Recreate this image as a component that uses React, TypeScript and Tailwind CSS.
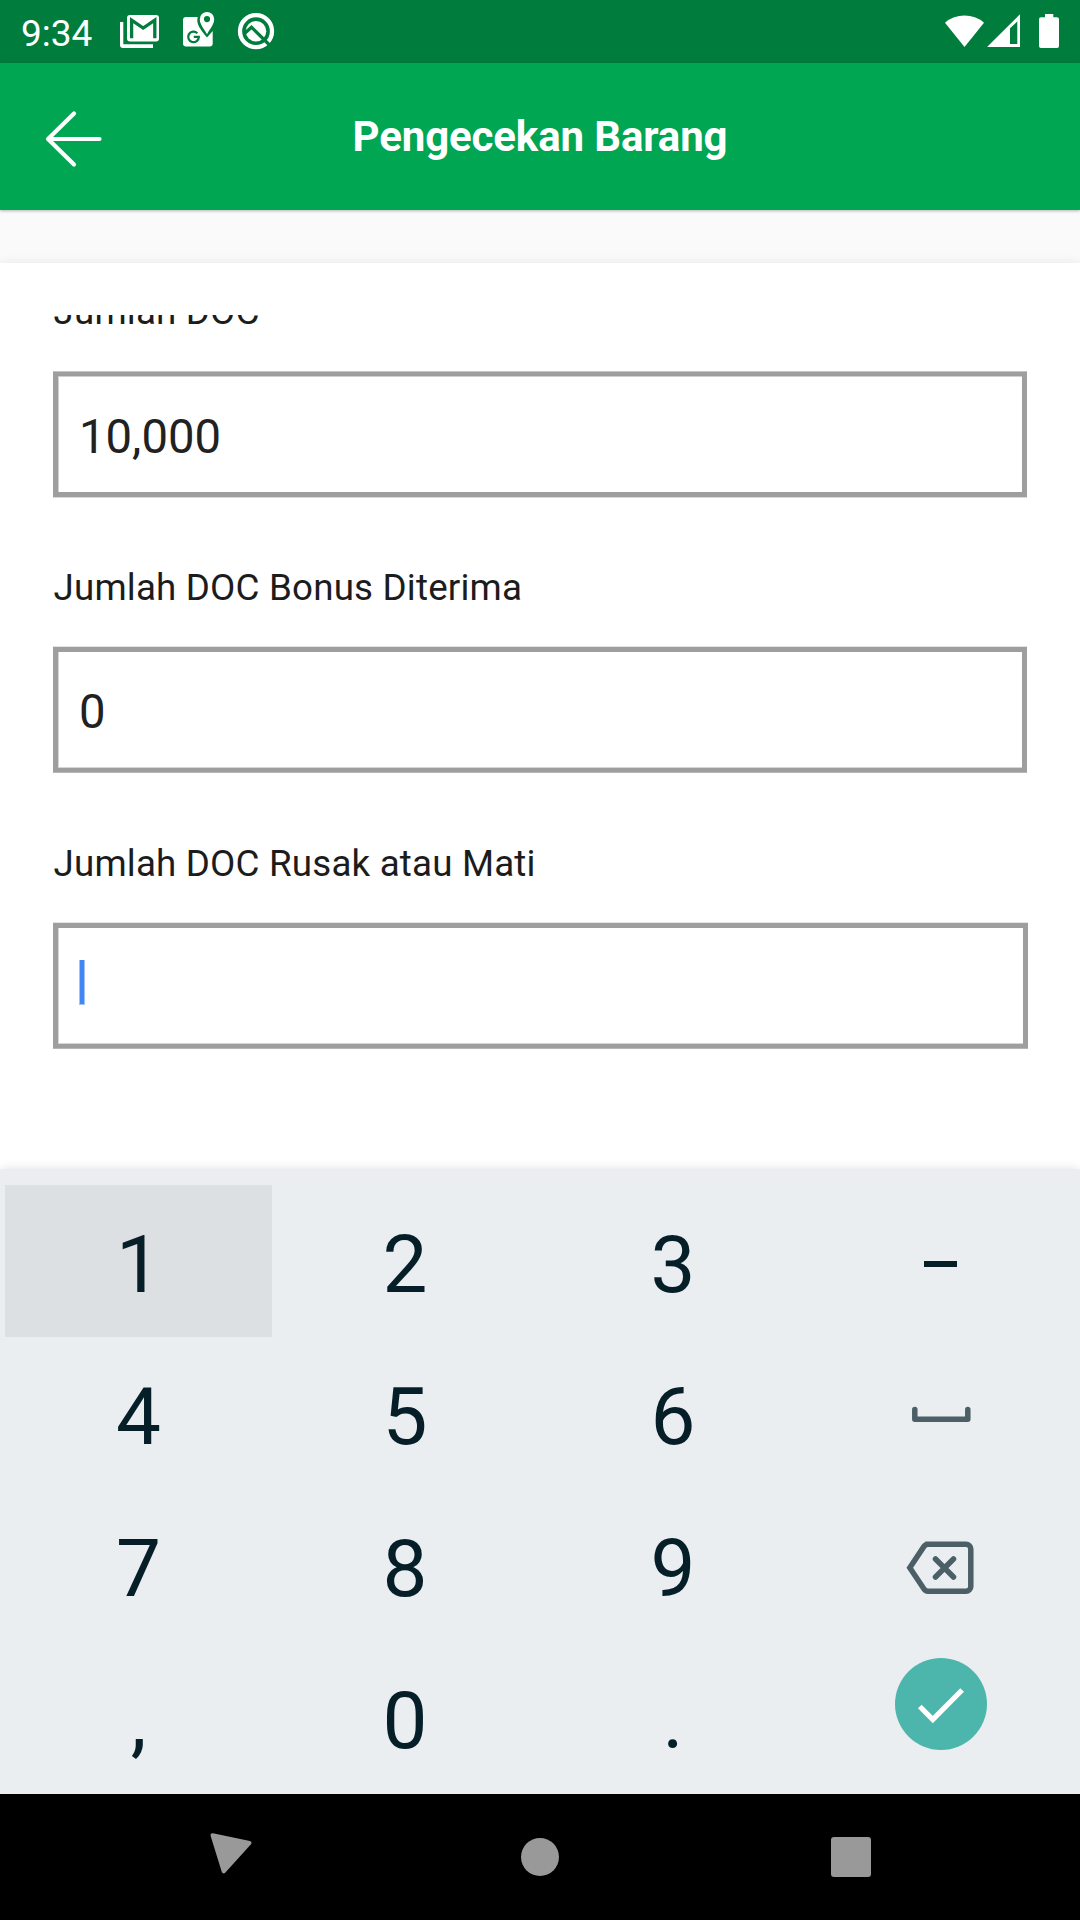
import type { ReactNode } from "react";

function StatusBar() {
  return (
    <div className="flex h-[63px] items-start bg-[#007c3c] text-white">
      <span className="ml-[21px] mt-[12px] w-[80px] text-[37px] leading-[44px] whitespace-nowrap">9:34</span>
      {/* Mail */}
      <svg className="ml-[19px] mt-[14px] h-[34px] w-[40px]" viewBox="120 14 40 34" fill="none">
        <path d="M120 22h3.300v22.200H153V48h-30a3 3 0 0 1-3-3z" fill="#fff" />
        <path d="M130 15h26a3 3 0 0 1 3 3v20.500a3 3 0 0 1-3 3h-26a3 3 0 0 1-3-3V18a3 3 0 0 1 3-3z" fill="#fff" />
        <path d="M131.600 38.300V20.200l11.600 7.800 11.600-7.800v18.100" stroke="#007c3c" strokeWidth="3.300" />
      </svg>
      {/* Maps */}
      <svg className="ml-[23px] mt-[12px] h-[35px] w-[32px]" viewBox="183 12 32 35" fill="none">
        <path d="M186 17h11.700c-1.800 7 2.300 12 9.300 20.500l5.700-6.500v12.500a3 3 0 0 1-3 3H186a3 3 0 0 1-3-3V20a3 3 0 0 1 3-3z" fill="#fff" />
        <path d="M197.300 33.200a5.300 5.300 0 1 0 1.500 3.700h-5" stroke="#007c3c" strokeWidth="2.300" />
        <path fillRule="evenodd" d="M207 12a7.200 7.200 0 0 0-7.200 7.200c0 5.400 4.300 9.300 7.200 15 2.900-5.700 7.200-9.600 7.200-15A7.200 7.200 0 0 0 207 12zm0 4a3.100 3.100 0 1 1 0 6.200 3.100 3.100 0 0 1 0-6.200z" fill="#fff" />
      </svg>
      {/* System beta badge */}
      <svg className="ml-[22px] mt-[12px] h-[38px] w-[38px]" viewBox="237 12 38 38" fill="none">
        <circle cx="256" cy="31.200" r="16" stroke="#fff" strokeWidth="4.300" />
        <circle cx="256" cy="31.200" r="10.300" fill="#fff" />
        <path d="M244.500 33.500l7-6.300L264.500 40l4.500 4.500" stroke="#007c3c" strokeWidth="3.200" />
      </svg>
      {/* Wi-Fi */}
      <svg className="ml-auto mt-[13px] h-[35px] w-[40px]" viewBox="945 13 40 35">
        <path d="M945 22.700a30 30 0 0 1 39 0L964.500 47z" fill="#fff" />
      </svg>
      {/* Mobile signal */}
      <svg className="ml-[2px] mt-[14px] h-[33px] w-[34px]" viewBox="987 14 34 33">
        <path fillRule="evenodd" d="M987 47L1020 14.300V47zM1010 28.300V44h7.300V21.500z" fill="#fff" />
      </svg>
      {/* Battery */}
      <svg className="ml-[17px] mr-[21px] mt-[14px] h-[34px] w-[21px]" viewBox="1038 14 21 34">
        <path d="M1045 14h8.300v3.300h3.700a2 2 0 0 1 2 2V46a2 2 0 0 1-2 2h-16a2 2 0 0 1-2-2V19.300a2 2 0 0 1 2-2h4z" fill="#fff" />
      </svg>
    </div>
  );
}

function Header() {
  return (
    <header className="relative z-10 flex h-[147px] items-center bg-[#00a652] shadow-[0_1px_3px_rgba(0,0,0,0.28)]">
      <svg className="mb-[-5px] ml-[45px] h-[58px] w-[58px]" viewBox="45 110 58 58" fill="none" stroke="#fff" strokeWidth="4.200" strokeLinecap="round" strokeLinejoin="round">
        <path d="M74 113.500L48 139l26 25.500M49 139h50.500" />
      </svg>
      <h1 className="mr-[103px] flex-1 pt-px text-center text-[42px] leading-[50px] font-bold tracking-[-0.13px] text-white">Pengecekan Barang</h1>
    </header>
  );
}

function Label({ children, className }: { children: ReactNode; className: string }) {
  return <div className={`${className} h-[44px] pl-[0.5px] text-[36.75px] leading-[46px] tracking-[0.18px] whitespace-nowrap text-[#1c1c1c]`}>{children}</div>;
}

function Form() {
  return (
    <main className="relative h-[906px] bg-white pt-[52px] shadow-[0_0_10px_rgba(0,0,0,0.08)]">
      <div className="h-[854px] overflow-hidden pl-[53px] text-[#212121]">
        <Label className="mt-[-26px]">Jumlah DOC</Label>
        <div className="mt-[39px] flex h-[125px] w-[974px] items-center border-[5px] border-t-4 border-[#9e9e9e] pl-[21px] text-[47.25px] leading-[56px] shadow-[0_-1px_0_#c4c4c4,0_1px_0_#d9d9d9,inset_1px_1px_0_#d0d0d0]">
          <span className="pt-[6px]">10,000</span>
        </div>
        <Label className="mt-[68px]">Jumlah DOC Bonus Diterima</Label>
        <div className="mt-[38px] flex h-[125px] w-[974px] items-center border-[5px] border-b-4 border-[#9e9e9e] pl-[21px] text-[47.25px] leading-[56px] shadow-[0_-1px_0_#e3e3e3,0_1px_0_#b5b5b5,inset_1px_-1px_0_#d6d6d6]">
          <span className="pt-[3px]">0</span>
        </div>
        <Label className="mt-[69px]">Jumlah DOC Rusak atau Mati</Label>
        <div className="mt-[38px] flex h-[125px] w-[975px] items-start border-[5px] border-b-4 border-[#9e9e9e] pl-[21px] pt-[32px] shadow-[0_-1px_0_#e3e3e3,0_1px_0_#b5b5b5,inset_1px_-1px_0_#d6d6d6]">
          <span className="h-[45px] w-[6px] border-x border-b border-[#a1c2fa] bg-[#4285f4]" />
        </div>
      </div>
    </main>
  );
}

function Key({ children, pressed }: { children: ReactNode; pressed?: boolean }) {
  return (
    <div className={`flex items-start justify-center pt-[33px] text-[80px] leading-[94px] text-[#051e28] ${pressed ? "bg-[#dce0e3]" : ""}`}>
      {children}
    </div>
  );
}

function Keyboard() {
  return (
    <section className="relative h-[625px] bg-[#eaeef1] px-[5px] pt-[16px] shadow-[0_0_10px_rgba(0,0,0,0.12)]">
      <div className="grid grid-cols-[267px_266px_270px_1fr] grid-rows-[152px_152px_152px_152px]">
        <Key pressed>1</Key>
        <Key>2</Key>
        <Key>3</Key>
        <Key>
          <span className="mt-[43px] mr-[2px] h-[6px] w-[33px] bg-[#051e28]" />
        </Key>
        <Key>4</Key>
        <Key>5</Key>
        <Key>6</Key>
        <Key>
          <svg className="mt-[36px] mr-px h-[18px] w-[60px]" viewBox="911 1406 60 18" fill="none" stroke="#4c5f67" strokeWidth="5.500" strokeLinecap="round" strokeLinejoin="round">
            <path d="M914.800 1409.500v9.800h53v-9.800" />
          </svg>
        </Key>
        <Key>7</Key>
        <Key>8</Key>
        <Key>9</Key>
        <Key>
          <svg className="mt-[18px] mr-px h-[56px] w-[70px]" viewBox="906 1540 70 56" fill="none" stroke="#4c5f67" strokeWidth="5.500" strokeLinecap="round" strokeLinejoin="round">
            <path d="M928 1544.200h38a4.800 4.800 0 0 1 4.800 4.800v37.400a4.800 4.800 0 0 1-4.800 4.800h-38a5 5 0 0 1-4-2.200L909.800 1567.700L924 1546.400a5 5 0 0 1 4-2.200z" strokeLinejoin="miter" />
            <path d="M935.500 1559l18 18M953.500 1559l-18 18" />
          </svg>
        </Key>
        <Key>,</Key>
        <Key>0</Key>
        <Key>.</Key>
        <Key>
          <div className="mt-[-16px] mr-px flex size-[92px] items-center justify-center rounded-full bg-[#4db6ac]">
            <svg className="h-[92px] w-[92px]" viewBox="895 1658 92 92" fill="none" stroke="#fff" strokeWidth="5.200">
              <path d="M919.800 1706.500l13 13 29.300-29.500" />
            </svg>
          </div>
        </Key>
      </div>
    </section>
  );
}

function NavBar() {
  return (
    <nav className="relative flex h-[126px] items-start bg-black">
      <svg className="ml-[209px] mt-[38px] h-[44px] w-[44px]" viewBox="209 1832 44 44" fill="#999" stroke="#999" strokeWidth="4" strokeLinejoin="round">
        <path d="M212.500 1835.200L249.500 1843L223.700 1871.300z" />
      </svg>
      <div className="ml-[268px] mt-[44px] size-[38px] rounded-full bg-[#999]" />
      <div className="ml-[272px] mt-[43px] size-[40px] rounded-[3px] bg-[#999]" />
    </nav>
  );
}

export default function App() {
  return (
    <div className="flex h-[1920px] w-[1080px] flex-col overflow-hidden bg-[#fafafa] font-['Roboto',sans-serif]">
      <StatusBar />
      <Header />
      <div className="h-[53px]" />
      <Form />
      <Keyboard />
      <NavBar />
    </div>
  );
}
